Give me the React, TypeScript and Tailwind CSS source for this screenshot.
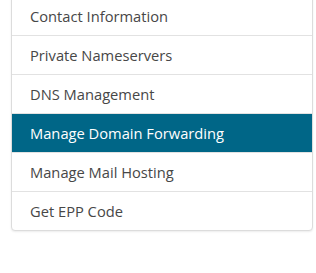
import React from "react";

const items = [
  "Contact Information",
  "Private Nameservers",
  "DNS Management",
  "Manage Domain Forwarding",
  "Manage Mail Hosting",
  "Get EPP Code",
];

export default function App() {
  const active = 3;
  return (
    <div className="h-[273px] w-[316px] bg-white font-['Open_Sans',sans-serif]">
      <div className="ml-[11px] -mt-[4px] w-[302px] rounded-b-[4px] border border-[#dcdcdc] bg-white shadow-[0_1px_2px_rgba(0,0,0,0.08)]">
        {items.map((label, i) => (
          <div
            key={label}
            className={
              "px-[18px] py-[9px] text-[14.7px] leading-[20px] " +
              (i > 0 ? "border-t border-[#e2e2e2] " : "") +
              (i === active ? "bg-[#006687] text-white" : "text-[#474747]")
            }
          >
            {label}
          </div>
        ))}
      </div>
    </div>
  );
}
